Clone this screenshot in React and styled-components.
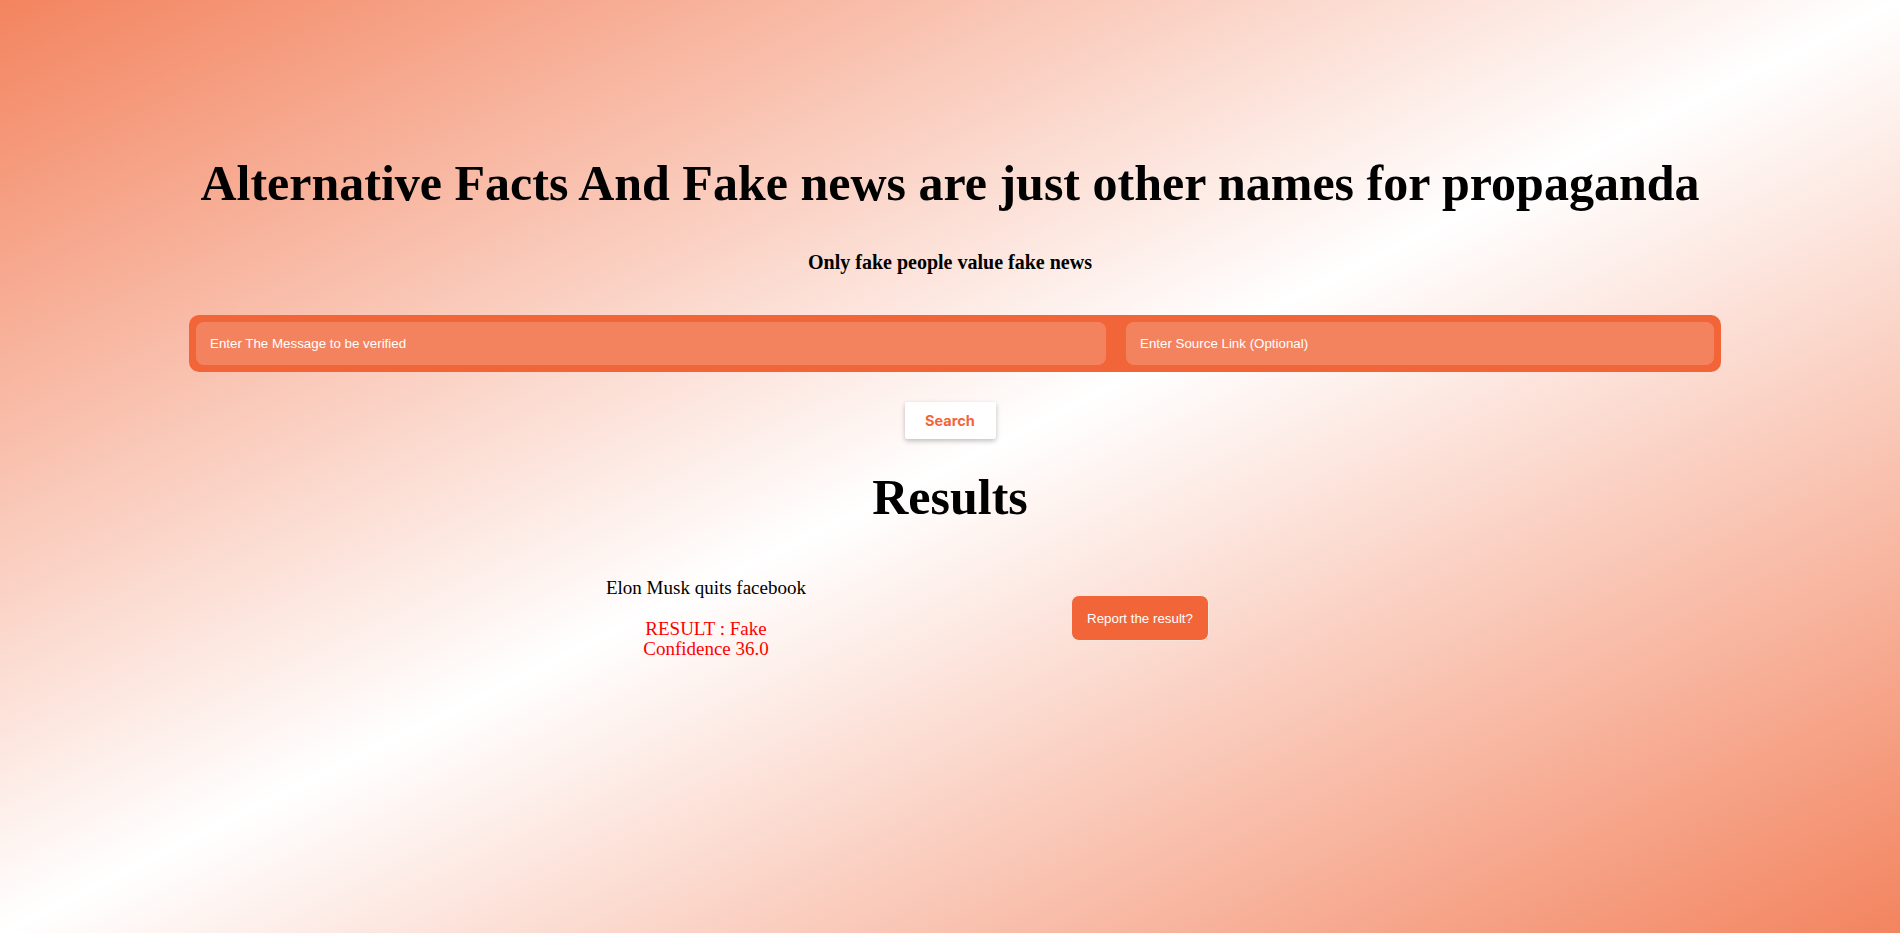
import React from "react";
import styled, { createGlobalStyle } from "styled-components";

const GlobalStyle = createGlobalStyle`
	* {
		box-sizing: border-box;
	}
	body {
		margin: 0;
		font-family: "Liberation Serif", "Times New Roman", serif;
	}
`;

const Page = styled.div`
	min-height: 100vh;
	display: flex;
	flex-direction: column;
	align-items: center;
	padding-top: 155px;
	background-image: linear-gradient(to bottom right, #f3845f 0%, #ffffff 50%, #f3845f 100%);
`;

const Title = styled.h1`
	margin: 0;
	font-size: 50px;
	line-height: 56px;
	font-weight: bold;
	color: #000;
	text-align: center;
`;

const Subtitle = styled.h3`
	margin: 40px 0 0;
	font-size: 20px;
	line-height: 23px;
	font-weight: bold;
	color: #000;
`;

const SearchBar = styled.form`
	margin: 41px 0 0 10px;
	width: 1532px;
	padding: 7px;
	display: grid;
	grid-template-columns: 910fr 588fr;
	gap: 20px;
	background: #f16538;
	border-radius: 10px;
`;

const Field = styled.input`
	height: 43px;
	padding: 0 14px;
	border: none;
	outline: none;
	border-radius: 8px;
	background: rgba(255, 255, 255, 0.2);
	color: #fff;
	font-family: "Liberation Sans", Arial, sans-serif;
	font-size: 13.33px;

	&::placeholder {
		color: #fff;
	}
`;

const SearchButton = styled.button`
	margin-top: 30px;
	width: 91px;
	height: 37px;
	border: none;
	border-radius: 2px;
	background: #fff;
	box-shadow: 0 2px 5px rgba(0, 0, 0, 0.25);
	color: #f26538;
	font-family: Inter, "Liberation Sans", sans-serif;
	font-size: 14.5px;
	font-weight: bold;
	cursor: pointer;
`;

const ResultsTitle = styled.h1`
	margin: 31px 0 0;
	font-size: 50px;
	line-height: 55px;
	font-weight: bold;
`;

const ResultRow = styled.div`
	margin-top: 52px;
	display: grid;
	grid-template-columns: 380px 488px;
	align-items: center;
	justify-items: center;
`;

const ResultText = styled.div`
	text-align: center;
	font-size: 19px;
`;

const Headline = styled.p`
	margin: 0 0 20px;
	line-height: 22px;
	color: #000;
`;

const Verdict = styled.p`
	margin: 0;
	line-height: 20px;
	color: #ff0000;
`;

const ReportButton = styled.button`
	padding: 0 15px;
	height: 46px;
	border: 1px solid #fde7de;
	border-radius: 8px;
	background: #f26538;
	color: #fff;
	font-family: "Liberation Sans", Arial, sans-serif;
	font-size: 13.33px;
	cursor: pointer;
`;

const results = [
	{ text: "Elon Musk quits facebook", verdict: "Fake", confidence: "36.0" },
];

export default function App() {
	return (
		<>
			<GlobalStyle />
			<Page>
				<Title>Alternative Facts And Fake news are just other names for propaganda</Title>
				<Subtitle>Only fake people value fake news</Subtitle>
				<SearchBar onSubmit={(e) => e.preventDefault()}>
					<Field placeholder="Enter The Message to be verified" />
					<Field placeholder="Enter Source Link (Optional)" />
				</SearchBar>
				<SearchButton>Search</SearchButton>
				<ResultsTitle>Results</ResultsTitle>
				{results.map((r) => (
					<ResultRow key={r.text}>
						<ResultText>
							<Headline>{r.text}</Headline>
							<Verdict>
								RESULT : {r.verdict}
								<br />
								Confidence {r.confidence}
							</Verdict>
						</ResultText>
						<ReportButton>Report the result?</ReportButton>
					</ResultRow>
				))}
			</Page>
		</>
	);
}
